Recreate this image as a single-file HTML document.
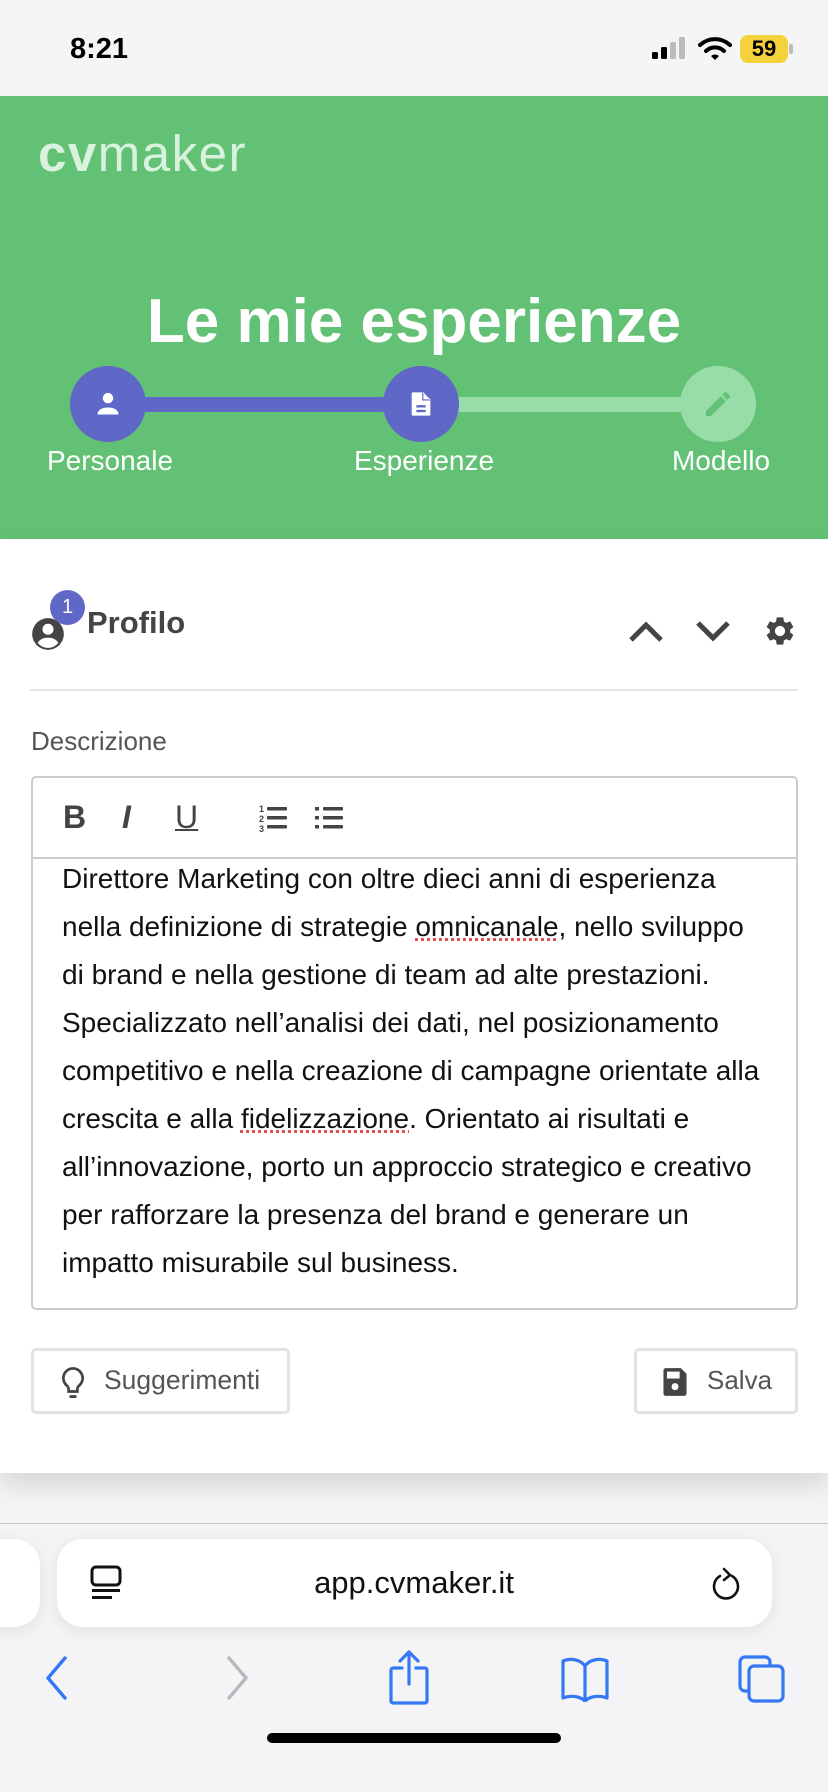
<!DOCTYPE html>
<html><head><meta charset="utf-8"><style>
*{margin:0;padding:0;box-sizing:border-box}
body{width:828px;height:1792px;position:relative;overflow:hidden;background:#f4f4f6;font-family:"Liberation Sans",sans-serif}
.abs{position:absolute}
</style></head><body>
<!-- status bar -->
<div class="abs" style="left:0;top:0;width:828px;height:96px;background:#f5f5f7"></div>
<div class="abs" style="left:70px;top:33px;font-size:29px;font-weight:bold;color:#000">8:21</div>
<svg class="abs" style="left:650px;top:37px" width="40" height="24"><rect x="2" y="15" width="6" height="7" rx="1.5" fill="#000"/><rect x="11" y="10" width="6" height="12" rx="1.5" fill="#000"/><rect x="20" y="5" width="6" height="17" rx="1.5" fill="#bbb"/><rect x="29" y="0" width="6" height="22" rx="1.5" fill="#bbb"/></svg>
<svg class="abs" style="left:698px;top:36px" width="34" height="26" viewBox="0 0 34 26"><path d="M2 9 A22 22 0 0 1 32 9" stroke="#000" stroke-width="4" fill="none" stroke-linecap="round"/><path d="M8 15 A13 13 0 0 1 26 15" stroke="#000" stroke-width="4" fill="none" stroke-linecap="round"/><path d="M13 20 L17 24 L21 20 A6 6 0 0 0 13 20Z" fill="#000"/></svg>
<div class="abs" style="left:740px;top:35px;width:48px;height:28px;border-radius:8px;background:#f4d23b;font-size:22px;font-weight:bold;text-align:center;line-height:28px;color:#000">59</div>
<div class="abs" style="left:789px;top:44px;width:4px;height:10px;border-radius:2px;background:#bbb"></div>

<!-- header -->
<div class="abs" style="left:0;top:96px;width:828px;height:443px;background:#62c174"></div>
<div class="abs" style="left:38px;top:124px;font-size:51px;color:#d9f2de;letter-spacing:1.5px"><b>cv</b>maker</div>
<div class="abs" style="left:0;top:286px;width:828px;text-align:center;font-size:62px;font-weight:bold;color:#fff">Le mie esperienze</div>
<div class="abs" style="left:108px;top:397px;width:313px;height:15px;background:#5f68c7"></div>
<div class="abs" style="left:421px;top:397px;width:297px;height:15px;background:#98dca9"></div>
<div class="abs" style="left:70px;top:366px;width:76px;height:76px;border-radius:50%;background:#5f68c7"></div>
<div class="abs" style="left:383px;top:366px;width:76px;height:76px;border-radius:50%;background:#5f68c7"></div>
<div class="abs" style="left:680px;top:366px;width:76px;height:76px;border-radius:50%;background:#98dca9"></div>
<svg class="abs" style="left:94px;top:390px" width="28" height="28" viewBox="0 0 24 24"><circle cx="12" cy="7" r="4.5" fill="#fff"/><path d="M3 21c0-4 4-6 9-6s9 2 9 6z" fill="#fff"/></svg>
<svg class="abs" style="left:407px;top:390px" width="28" height="28" viewBox="0 0 24 24"><path d="M5 2h9l6 6v13a1 1 0 0 1-1 1H5a1 1 0 0 1-1-1V3a1 1 0 0 1 1-1z" fill="#fff"/><path d="M13 2v7h7" fill="#5f68c7"/><path d="M14 3v5h5" fill="#fff"/><rect x="8" y="13" width="8" height="2" fill="#5f68c7"/><rect x="8" y="17" width="8" height="2" fill="#5f68c7"/></svg>
<svg class="abs" style="left:702px;top:388px" width="32" height="32" viewBox="0 0 24 24"><path d="M3 17.25V21h3.75L17.8 9.94l-3.75-3.75z" fill="#62c174"/><path d="M20.7 7.04a1 1 0 0 0 0-1.41l-2.34-2.34a1 1 0 0 0-1.41 0l-1.83 1.83 3.75 3.75z" fill="#62c174"/></svg>
<div class="abs" style="left:0;top:445px;width:220px;text-align:center;font-size:28px;color:#fff">Personale</div>
<div class="abs" style="left:320px;top:445px;width:208px;text-align:center;font-size:28px;color:#fff">Esperienze</div>
<div class="abs" style="left:640px;top:445px;width:162px;text-align:center;font-size:28px;color:#fff">Modello</div>

<!-- card -->
<div class="abs" style="left:0;top:539px;width:828px;height:934px;background:#fff;box-shadow:0 12px 24px rgba(0,0,0,0.12)"></div>
<svg class="abs" style="left:29px;top:615px" width="38" height="38" viewBox="0 0 24 24"><circle cx="12" cy="12" r="10" fill="#444"/><circle cx="12" cy="9" r="3.5" fill="#fff"/><path d="M5.5 17.5c1.5-2.3 4-3.2 6.5-3.2s5 .9 6.5 3.2A8 8 0 0 1 5.5 17.5z" fill="#fff"/></svg>
<div class="abs" style="left:50px;top:590px;width:35px;height:35px;border-radius:50%;background:#5f68c7;color:#fff;font-size:20px;text-align:center;line-height:35px">1</div>
<div class="abs" style="left:87px;top:605px;font-size:31px;font-weight:bold;color:#444">Profilo</div>
<svg class="abs" style="left:626px;top:616px" width="40" height="30" viewBox="0 0 40 30"><path d="M5 24 L20 9 L35 24" stroke="#444" stroke-width="5" fill="none"/></svg>
<svg class="abs" style="left:693px;top:616px" width="40" height="30" viewBox="0 0 40 30"><path d="M5 7 L20 22 L35 7" stroke="#444" stroke-width="5" fill="none"/></svg>
<svg class="abs" style="left:763px;top:614px" width="34" height="34" viewBox="0 0 24 24"><path fill="#444" d="M19.14 12.94a7 7 0 0 0 0-1.88l2.03-1.58a.5.5 0 0 0 .12-.61l-1.92-3.32a.5.5 0 0 0-.59-.22l-2.39.96a7 7 0 0 0-1.62-.94l-.36-2.54A.5.5 0 0 0 13.9 2.4h-3.84a.5.5 0 0 0-.48.41l-.36 2.54a7 7 0 0 0-1.62.94l-2.39-.96a.5.5 0 0 0-.59.22L2.7 8.87a.5.5 0 0 0 .12.61l2.03 1.58a7 7 0 0 0 0 1.88l-2.03 1.58a.5.5 0 0 0-.12.61l1.92 3.32c.12.22.37.29.59.22l2.39-.96c.5.38 1.04.7 1.62.94l.36 2.54c.05.24.25.41.48.41h3.84c.24 0 .44-.17.47-.41l.36-2.54c.58-.24 1.12-.56 1.62-.94l2.39.96c.22.08.47 0 .59-.22l1.92-3.32a.5.5 0 0 0-.12-.61zM12 15.6A3.6 3.6 0 1 1 12 8.4a3.6 3.6 0 0 1 0 7.2z"/></svg>
<div class="abs" style="left:30px;top:689px;width:768px;height:2px;background:#e6e6e6"></div>
<div class="abs" style="left:31px;top:726px;font-size:26px;color:#555">Descrizione</div>

<div class="abs" style="left:31px;top:776px;width:767px;height:534px;border:2px solid #ccc;border-radius:5px"></div>
<div class="abs" style="left:33px;top:857px;width:763px;height:2px;background:#ccc"></div>
<div class="abs" style="left:63px;top:799px;font-size:32px;font-weight:bold;color:#444">B</div>
<div class="abs" style="left:122px;top:799px;font-size:32px;font-style:italic;font-weight:bold;color:#444">I</div>
<div class="abs" style="left:175px;top:799px;font-size:32px;color:#444;text-decoration:underline;text-decoration-thickness:2px">U</div>
<svg class="abs" style="left:259px;top:803px" width="30" height="30" viewBox="0 0 30 30"><text x="0" y="9" font-size="9" font-family="Liberation Sans" font-weight="bold" fill="#444">1</text><text x="0" y="19" font-size="9" font-family="Liberation Sans" font-weight="bold" fill="#444">2</text><text x="0" y="29" font-size="9" font-family="Liberation Sans" font-weight="bold" fill="#444">3</text><rect x="8" y="4" width="20" height="3.5" rx="1" fill="#444"/><rect x="8" y="13" width="20" height="3.5" rx="1" fill="#444"/><rect x="8" y="22" width="20" height="3.5" rx="1" fill="#444"/></svg>
<svg class="abs" style="left:315px;top:803px" width="30" height="30" viewBox="0 0 30 30"><rect x="0" y="4" width="4" height="3.5" fill="#444"/><rect x="0" y="13" width="4" height="3.5" fill="#444"/><rect x="0" y="22" width="4" height="3.5" fill="#444"/><rect x="8" y="4" width="20" height="3.5" rx="1" fill="#444"/><rect x="8" y="13" width="20" height="3.5" rx="1" fill="#444"/><rect x="8" y="22" width="20" height="3.5" rx="1" fill="#444"/></svg>
<div class="abs" style="left:62px;top:855px;width:740px;font-size:28px;line-height:48px;color:#111;white-space:nowrap">Direttore Marketing con oltre dieci anni di esperienza<br>nella definizione di strategie <span style="text-decoration:underline dotted #e04040">omnicanale</span>, nello sviluppo<br>di brand e nella gestione di team ad alte prestazioni.<br>Specializzato nell’analisi dei dati, nel posizionamento<br>competitivo e nella creazione di campagne orientate alla<br>crescita e alla <span style="text-decoration:underline dotted #e04040">fidelizzazione</span>. Orientato ai risultati e<br>all’innovazione, porto un approccio strategico e creativo<br>per rafforzare la presenza del brand e generare un<br>impatto misurabile sul business.</div>

<div class="abs" style="left:31px;top:1348px;width:259px;height:66px;border:3px solid #e2e2e2;border-radius:5px"></div>
<svg class="abs" style="left:58px;top:1366px" width="30" height="34" viewBox="0 0 24 28"><path d="M12 2a8 8 0 0 0-5 14.2c.8.7 1.4 1.8 1.4 3V21h7.2v-1.8c0-1.2.6-2.3 1.4-3A8 8 0 0 0 12 2z" stroke="#444" stroke-width="2.2" fill="none"/><rect x="9" y="24" width="6" height="2.4" rx="1" fill="#444"/></svg>
<div class="abs" style="left:104px;top:1365px;font-size:26.5px;color:#555">Suggerimenti</div>
<div class="abs" style="left:634px;top:1348px;width:164px;height:66px;border:3px solid #e2e2e2;border-radius:5px"></div>
<svg class="abs" style="left:661px;top:1367px" width="28" height="30" viewBox="0 0 24 26"><path d="M2 3a2 2 0 0 1 2-2h13l5 5v17a2 2 0 0 1-2 2H4a2 2 0 0 1-2-2z" fill="#444"/><rect x="5" y="4" width="11" height="6" fill="#fff"/><circle cx="12" cy="17" r="3" fill="#fff"/></svg>
<div class="abs" style="left:707px;top:1365px;font-size:26px;color:#555">Salva</div>

<!-- safari bar -->
<div class="abs" style="left:0;top:1523px;width:828px;height:1px;background:#c8c8c8"></div>
<div class="abs" style="left:-30px;top:1539px;width:70px;height:88px;border-radius:26px;background:#fff;box-shadow:0 4px 16px rgba(0,0,0,0.08)"></div>
<div class="abs" style="left:57px;top:1539px;width:715px;height:88px;border-radius:26px;background:#fff;box-shadow:0 4px 16px rgba(0,0,0,0.08)"></div>
<svg class="abs" style="left:90px;top:1565px" width="32" height="36" viewBox="0 0 32 36"><rect x="2" y="2" width="28" height="18" rx="4" stroke="#111" stroke-width="3" fill="none"/><rect x="2" y="24" width="28" height="3" fill="#111"/><rect x="2" y="31" width="20" height="3" fill="#111"/></svg>
<div class="abs" style="left:0;top:1565px;width:828px;text-align:center;font-size:31px;color:#111">app.cvmaker.it</div>
<svg class="abs" style="left:710px;top:1566px" width="34" height="36" viewBox="0 0 34 36"><path d="M22 10 A12 12 0 1 1 10 10" stroke="#111" stroke-width="2.6" fill="none" stroke-linecap="round"/><path d="M14 3 L20 9 L14 14" stroke="#111" stroke-width="2.6" fill="none" stroke-linecap="round" stroke-linejoin="round"/></svg>
<svg class="abs" style="left:44px;top:1655px" width="26" height="46" viewBox="0 0 26 46"><path d="M21 3 L4 23 L21 43" stroke="#3478f6" stroke-width="3.4" fill="none" stroke-linecap="round" stroke-linejoin="round"/></svg>
<svg class="abs" style="left:224px;top:1655px" width="26" height="46" viewBox="0 0 26 46"><path d="M5 3 L22 23 L5 43" stroke="#b8b8bc" stroke-width="3.4" fill="none" stroke-linecap="round" stroke-linejoin="round"/></svg>
<svg class="abs" style="left:388px;top:1650px" width="42" height="56" viewBox="0 0 42 56"><path d="M14 18 H5 a2 2 0 0 0-2 2 V51 a2 2 0 0 0 2 2 H37 a2 2 0 0 0 2-2 V20 a2 2 0 0 0-2-2 H28" stroke="#3478f6" stroke-width="3.2" fill="none" stroke-linecap="round"/><path d="M21 34 V3 M12 11 L21 2 L30 11" stroke="#3478f6" stroke-width="3.2" fill="none" stroke-linecap="round" stroke-linejoin="round"/></svg>
<svg class="abs" style="left:560px;top:1656px" width="50" height="46" viewBox="0 0 50 46"><path d="M25 10 C20 3 10 2 3 5 V42 C10 39 20 40 25 45 C30 40 40 39 47 42 V5 C40 2 30 3 25 10 Z M25 10 V45" stroke="#3478f6" stroke-width="3.2" fill="none" stroke-linejoin="round"/></svg>
<svg class="abs" style="left:738px;top:1655px" width="48" height="48" viewBox="0 0 48 48"><rect x="2" y="2" width="30" height="34" rx="5" stroke="#3478f6" stroke-width="3.2" fill="none"/><rect x="11" y="11" width="34" height="35" rx="5" stroke="#3478f6" stroke-width="3.2" fill="#f4f4f6"/></svg>
<div class="abs" style="left:267px;top:1733px;width:294px;height:10px;border-radius:5px;background:#000"></div>
</body></html>
